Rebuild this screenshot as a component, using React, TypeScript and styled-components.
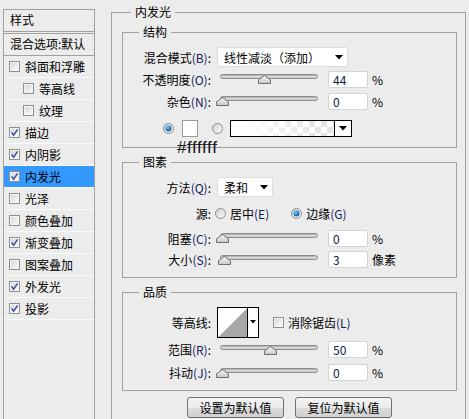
import React from "react";
import styled, { createGlobalStyle } from "styled-components";

const GlobalStyle = createGlobalStyle`
  html, body {
    margin: 0;
    padding: 0;
    background: #ececec;
    overflow: hidden;
  }
  body {
    font-family: "Noto Sans CJK SC", "Noto Sans", sans-serif;
    font-size: 12px;
    color: #000;
  }
`;

const Page = styled.div`
  display: flex;
  align-items: flex-start;
  padding-left: 3px;
  height: 419px;
`;

/* ---------- left style list ---------- */

const Sidebar = styled.div`
  box-sizing: border-box;
  width: 92px;
  height: 420px;
  margin-top: 9px;
  border: 1px solid #a0a0a0;
  border-bottom: none;
  display: flex;
  flex-direction: column;
`;

const SideHeader = styled.div<{ $top?: boolean }>`
  height: 21px;
  line-height: 19px;
  padding-left: 6px;
  border-top: ${(p) => (p.$top ? "1px solid #a0a0a0" : "none")};
  border-bottom: 1px solid #a0a0a0;
  margin-bottom: ${(p) => (p.$top ? "0" : "1px")};
  white-space: nowrap;
`;

const SideItem = styled.div<{ $active?: boolean; $indent?: boolean }>`
  display: flex;
  align-items: center;
  gap: 5px;
  height: 21px;
  padding-left: ${(p) => (p.$indent ? "19px" : "5px")};
  border-bottom: 1px solid #fafafa;
  background: ${(p) => (p.$active ? "#3399ff" : "transparent")};
  white-space: nowrap;
`;

/* ---------- group boxes ---------- */

const Main = styled.fieldset`
  box-sizing: border-box;
  width: 355px;
  margin: 4px 0 0 16px;
  padding: 4px 8px 30px 10px;
  border: 1px solid #a0a0a0;
  min-width: 0;
`;

const Legend = styled.legend<{ $offset: number }>`
  padding: 0 4px;
  margin-left: ${(p) => p.$offset}px;
  line-height: 16px;
  height: 16px;
`;

const Group = styled.fieldset<{ $pt: number; $pb: number; $mt?: number }>`
  position: relative;
  margin: ${(p) => p.$mt ?? 0}px 0 0 0;
  padding: ${(p) => p.$pt}px 0 ${(p) => p.$pb}px 0;
  border: 1px solid #a0a0a0;
  min-width: 0;
`;

const Row = styled.div<{ $h: number; $pl?: number; $mt?: number }>`
  position: relative;
  display: flex;
  align-items: center;
  height: ${(p) => p.$h}px;
  margin-top: ${(p) => p.$mt ?? 0}px;
  padding-left: ${(p) => p.$pl ?? 0}px;
  white-space: nowrap;
`;

const Label = styled.div`
  width: 88px;
  text-align: right;
  margin-right: 6px;
`;

const Key = styled.span`
  color: #14205a;
`;

const Select = styled.div<{ $w: number }>`
  box-sizing: border-box;
  width: ${(p) => p.$w}px;
  height: 20px;
  display: flex;
  align-items: center;
  justify-content: space-between;
  padding: 0 4px 0 6px;
  background: #fff;
  border: 1px solid #dcdcdc;
  border-radius: 2px;
`;

const SliderBox = styled.div`
  position: relative;
  width: 104px;
  height: 11px;
  margin-top: 1px;
`;

const Track = styled.div`
  box-sizing: border-box;
  margin-left: 3px;
  width: 98px;
  height: 5px;
  border: 1px solid #8c8c8c;
  border-radius: 3px;
  background: linear-gradient(to bottom, #a6a6a6, #e2e2e2 60%, #c4c4c4);
`;

const Thumb = styled.svg`
  position: absolute;
  top: 1px;
`;

const NumField = styled.input`
  box-sizing: border-box;
  width: 40px;
  height: 17px;
  margin-left: 7px;
  padding: 0 0 0 4px;
  border: 1px solid #d4d4d4;
  border-radius: 2px;
  background: #fff;
  font: 12px "Noto Sans CJK SC", "Noto Sans", sans-serif;
  color: #101840;
  outline: none;
`;

const Unit = styled.span`
  margin-left: 4px;
`;

const Swatch = styled.div`
  box-sizing: border-box;
  width: 16px;
  height: 17px;
  margin: 0 14px 0 8px;
  background: #fff;
  border: 1px solid #9a9a9a;
`;

const GradientBox = styled.div`
  box-sizing: border-box;
  display: flex;
  width: 122px;
  height: 17px;
  margin-left: 7px;
  border: 1px solid #000;
`;

const GradientFill = styled.div`
  flex: 1;
  background: linear-gradient(to right, #fff 8%, rgba(255, 255, 255, 0) 85%),
    conic-gradient(#e4e4e4 25%, #fff 0 50%, #e4e4e4 0 75%, #fff 0) 0 0 / 12px 12px;
`;

const ArrowCell = styled.div<{ $w: number }>`
  width: ${(p) => p.$w}px;
  display: flex;
  align-items: center;
  justify-content: center;
  border-left: 1px solid #000;
  background: #fff;
`;

const HexNote = styled.div`
  position: absolute;
  left: 54px;
  top: 22px;
  font: 17px "Liberation Sans", Arial, sans-serif;
  letter-spacing: 0.6px;
  line-height: 17px;
  color: #111;
  z-index: 2;
`;

const RadioLabel = styled.span<{ $mr?: number }>`
  margin-left: 4px;
  margin-right: ${(p) => p.$mr ?? 0}px;
`;

const ContourBox = styled.div`
  box-sizing: border-box;
  display: flex;
  width: 42px;
  height: 31px;
  border: 1px solid #000;
`;

const ContourPreview = styled.div`
  flex: 1;
  background: linear-gradient(to top left, #a8a8a8 50%, #fff 50%);
`;

const CheckLabel = styled.span`
  margin-left: 4px;
`;

const Buttons = styled.div`
  display: flex;
  justify-content: center;
  gap: 11px;
  margin-top: 6px;
`;

const Button = styled.button`
  box-sizing: border-box;
  width: 97px;
  height: 21px;
  padding: 0;
  border: 1px solid #707070;
  border-radius: 3px;
  background: linear-gradient(to bottom, #f4f4f4 0%, #ebebeb 50%, #dcdcdc 51%, #d0d0d0 100%);
  font: 12px "Noto Sans CJK SC", "Noto Sans", sans-serif;
  color: #000;
`;

/* ---------- drawings ---------- */

function CheckBox({ checked }: { checked?: boolean }) {
  return (
    <svg width="11" height="11" viewBox="0 0 11 11" style={{ flex: "none" }}>
      <defs>
        <linearGradient id="cbfill" x1="0" y1="0" x2="1" y2="1">
          <stop offset="0" stopColor="#d6d6d6" />
          <stop offset="1" stopColor="#fbfbfb" />
        </linearGradient>
      </defs>
      <rect x="0.5" y="0.5" width="10" height="10" fill="#f6f6f6" stroke="#8f8f8f" />
      <rect x="2" y="2" width="7" height="7" fill="url(#cbfill)" />
      {checked && (
        <path d="M2.6 5.4 L4.6 8.2 L8.6 2.4" stroke="#3a4ea8" strokeWidth="1.5" fill="none" />
      )}
    </svg>
  );
}

function Radio({ on }: { on?: boolean }) {
  return (
    <svg width="11" height="11" viewBox="0 0 11 11" style={{ flex: "none" }}>
      <defs>
        <linearGradient id="rdfill" x1="0" y1="0" x2="1" y2="1">
          <stop offset="0" stopColor="#cfcfcf" />
          <stop offset="1" stopColor="#fdfdfd" />
        </linearGradient>
        <radialGradient id="rdon" cx="0.4" cy="0.35" r="0.7">
          <stop offset="0" stopColor="#8fd2ff" />
          <stop offset="0.5" stopColor="#1f86d6" />
          <stop offset="1" stopColor="#0b4f91" />
        </radialGradient>
      </defs>
      <circle cx="5.5" cy="5.5" r="5" fill="url(#rdfill)" stroke="#8a8a8a" />
      {on && <circle cx="5.5" cy="5.5" r="3" fill="url(#rdon)" />}
    </svg>
  );
}

function Arrow() {
  return (
    <svg width="8" height="5" viewBox="0 0 8 5">
      <path d="M0 0 H8 L4 4.5 Z" fill="#000" />
    </svg>
  );
}

function Slider({ pct }: { pct: number }) {
  return (
    <SliderBox>
      <Track />
      <Thumb width="13" height="9" viewBox="0 0 13 9" style={{ left: 4 + (pct / 100) * 97 - 6.5 + 1 }}>
        <defs>
          <linearGradient id="thfill" x1="0" y1="0" x2="0" y2="1">
            <stop offset="0" stopColor="#fafafa" />
            <stop offset="1" stopColor="#c6c6c6" />
          </linearGradient>
        </defs>
        <path d="M0.5 8.5 V4.8 L6.5 0.5 L12.5 4.8 V8.5 Z" fill="url(#thfill)" stroke="#6e6e6e" />
      </Thumb>
    </SliderBox>
  );
}

function SliderRow({
  label,
  k,
  pct,
  value,
  unit,
  h,
}: {
  label: string;
  k: string;
  pct: number;
  value: string;
  unit: string;
  h: number;
}) {
  return (
    <Row $h={h}>
      <Label>
        {label}
        <Key>({k})</Key>:
      </Label>
      <Slider pct={pct} />
      <NumField readOnly defaultValue={value} />
      <Unit>{unit}</Unit>
    </Row>
  );
}

const styles: { name: string; checked: boolean; indent?: boolean; active?: boolean }[] = [
  { name: "斜面和浮雕", checked: false },
  { name: "等高线", checked: false, indent: true },
  { name: "纹理", checked: false, indent: true },
  { name: "描边", checked: true },
  { name: "内阴影", checked: true },
  { name: "内发光", checked: true, active: true },
  { name: "光泽", checked: false },
  { name: "颜色叠加", checked: false },
  { name: "渐变叠加", checked: true },
  { name: "图案叠加", checked: false },
  { name: "外发光", checked: true },
  { name: "投影", checked: true },
];

export default function App() {
  return (
    <>
      <GlobalStyle />
      <Page>
        <Sidebar>
          <SideHeader>样式</SideHeader>
          <SideHeader $top>混合选项:默认</SideHeader>
          {styles.map((s) => (
            <SideItem key={s.name} $active={s.active} $indent={s.indent}>
              <CheckBox checked={s.checked} />
              <span>{s.name}</span>
            </SideItem>
          ))}
        </Sidebar>

        <Main>
          <Legend $offset={9}>内发光</Legend>

          <Group $pt={6} $pb={8}>
            <Legend $offset={16}>结构</Legend>
            <Row $h={22}>
              <Label>
                混合模式<Key>(B)</Key>:
              </Label>
              <Select $w={131}>
                <span>线性减淡（添加）</span>
                <Arrow />
              </Select>
            </Row>
            <SliderRow label="不透明度" k="O" pct={44} value="44" unit="%" h={22} />
            <SliderRow label="杂色" k="N" pct={0} value="0" unit="%" h={22} />
            <Row $h={22} $mt={5} $pl={40}>
              <Radio on />
              <Swatch />
              <Radio />
              <GradientBox>
                <GradientFill />
                <ArrowCell $w={16}>
                  <Arrow />
                </ArrowCell>
              </GradientBox>
              <HexNote>#ffffff</HexNote>
            </Row>
          </Group>

          <Group $pt={5} $pb={7} $mt={6}>
            <Legend $offset={16}>图素</Legend>
            <Row $h={24}>
              <Label>
                方法<Key>(Q)</Key>:
              </Label>
              <Select $w={56}>
                <span>柔和</span>
                <Arrow />
              </Select>
            </Row>
            <Row $h={28}>
              <Label style={{ marginRight: 4 }}>源:</Label>
              <Radio />
              <RadioLabel $mr={22}>
                居中<Key>(E)</Key>
              </RadioLabel>
              <Radio on />
              <RadioLabel>
                边缘<Key>(G)</Key>
              </RadioLabel>
            </Row>
            <SliderRow label="阻塞" k="C" pct={0} value="0" unit="%" h={22} />
            <SliderRow label="大小" k="S" pct={3} value="3" unit="像素" h={21} />
          </Group>

          <Group $pt={6} $pb={6} $mt={6}>
            <Legend $offset={16}>品质</Legend>
            <Row $h={32}>
              <Label>等高线:</Label>
              <ContourBox>
                <ContourPreview />
                <ArrowCell $w={10}>
                  <svg width="6" height="4" viewBox="0 0 6 4">
                    <path d="M0 0 H6 L3 3.5 Z" fill="#000" />
                  </svg>
                </ArrowCell>
              </ContourBox>
              <span style={{ width: 14 }} />
              <CheckBox />
              <CheckLabel>
                消除锯齿<Key>(L)</Key>
              </CheckLabel>
            </Row>
            <SliderRow label="范围" k="R" pct={50} value="50" unit="%" h={23} />
            <SliderRow label="抖动" k="J" pct={0} value="0" unit="%" h={23} />
          </Group>

          <Buttons>
            <Button>设置为默认值</Button>
            <Button>复位为默认值</Button>
          </Buttons>
        </Main>
      </Page>
    </>
  );
}
